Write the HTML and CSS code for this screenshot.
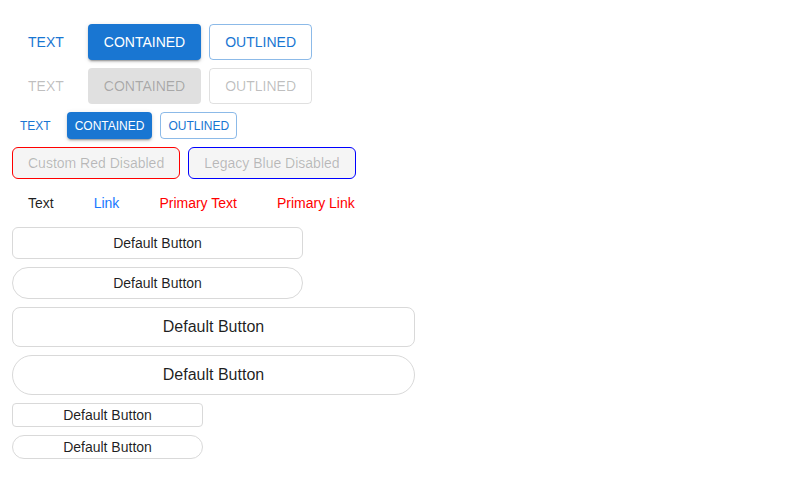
FILE: index.html
```html
<!DOCTYPE html>
<html>
<head>
<meta charset="utf-8">
<link rel="stylesheet" href="styles.css">
</head>
<body>
<div class="page">
  <div class="row">
    <button class="mui text">TEXT</button>
    <button class="mui contained">CONTAINED</button>
    <button class="mui outlined">OUTLINED</button>
  </div>
  <div class="row">
    <button class="mui text disabled">TEXT</button>
    <button class="mui contained disabled">CONTAINED</button>
    <button class="mui outlined disabled">OUTLINED</button>
  </div>
  <div class="row">
    <button class="mui small text">TEXT</button>
    <button class="mui small contained">CONTAINED</button>
    <button class="mui small outlined">OUTLINED</button>
  </div>
  <div class="row">
    <button class="legacy red">Custom Red Disabled</button>
    <button class="legacy blue">Legacy Blue Disabled</button>
  </div>
  <div class="row">
    <button class="plain">Text</button>
    <button class="plain link">Link</button>
    <button class="plain primary">Primary Text</button>
    <button class="plain primary">Primary Link</button>
  </div>
  <button class="def mid">Default Button</button>
  <button class="def mid round">Default Button</button>
  <button class="def lg">Default Button</button>
  <button class="def lg round">Default Button</button>
  <button class="def sm">Default Button</button>
  <button class="def sm round">Default Button</button>
</div>
</body>
</html>
```
FILE: styles.css
```css
* { box-sizing: border-box; }
body {
  margin: 0;
  background: #fff;
  font-family: "Liberation Sans", Arial, sans-serif;
}
.page {
  display: flex;
  flex-direction: column;
  align-items: flex-start;
  gap: 8px;
  padding: 24px 12px;
}
.row {
  display: flex;
  gap: 8px;
}
button {
  font-family: "Liberation Sans", Arial, sans-serif;
  margin: 0;
  white-space: nowrap;
  cursor: pointer;
}
.mui {
  height: 36px;
  padding: 0 15px;
  font-size: 14px;
  line-height: 20px;
  border-radius: 4px;
  border: 1px solid transparent;
  background: transparent;
  color: #1976d2;
}
.mui.contained {
  background: #1976d2;
  color: #fff;
  box-shadow: 0 3px 1px -2px rgba(0,0,0,0.2), 0 2px 2px 0 rgba(0,0,0,0.14), 0 1px 5px 0 rgba(0,0,0,0.12);
}
.mui.outlined { border-color: rgba(25,118,210,0.5); }
.mui.disabled { color: rgba(0,0,0,0.26); }
.mui.contained.disabled {
  background: rgba(0,0,0,0.12);
  box-shadow: none;
}
.mui.outlined.disabled { border-color: rgba(0,0,0,0.12); }
.mui.small {
  height: 27px;
  font-size: 12px;
  padding: 0 7px;
}

.legacy {
  height: 32px;
  padding: 0 15px;
  font-size: 14px;
  border-radius: 6px;
  background: #f5f5f5;
  color: rgba(0,0,0,0.25);
}
.legacy.red { border: 1px solid #ff0000; }
.legacy.blue { border: 1px solid #0000ff; }

.plain {
  height: 32px;
  padding: 0 16px;
  font-size: 14px;
  background: transparent;
  border: none;
  color: rgba(0,0,0,0.88);
}
.plain.link { color: #1677ff; }
.plain.primary { color: #ff0000; }

.def {
  background: #fff;
  border: 1px solid #d9d9d9;
  color: rgba(0,0,0,0.88);
  font-size: 14px;
  padding: 0 15px;
}
.def.mid { width: 291px; height: 32px; border-radius: 6px; }
.def.lg { width: 403px; height: 40px; border-radius: 8px; font-size: 16px; }
.def.sm { width: 191px; height: 24px; border-radius: 4px; }
.def.round { border-radius: 999px; }
```
